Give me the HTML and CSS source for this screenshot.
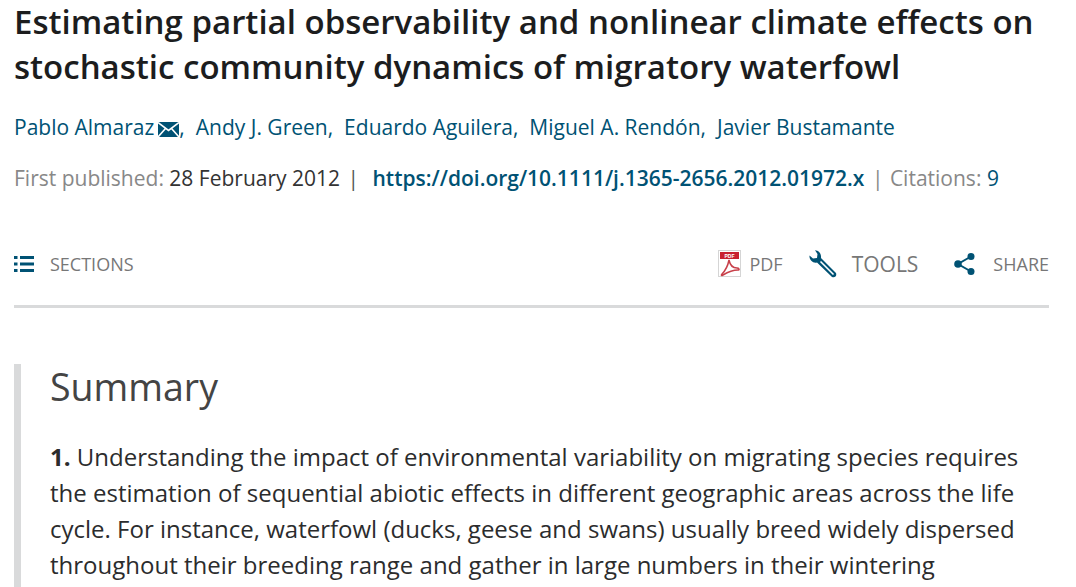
FILE: index.html
```html
<!DOCTYPE html>
<html lang="en">
<head>
    <meta charset="UTF-8">
    <title>Estimating partial observability and nonlinear climate effects</title>
    <link rel="stylesheet" href="styles.css">
</head>
<body>
    <div class="article">
        <h1>Estimating partial observability and nonlinear climate effects on stochastic community dynamics of migratory waterfowl</h1>
        <div class="authors">
            <a class="author">Pablo Almaraz<svg class="mail" width="21" height="15" viewBox="0 0 21 15"><rect width="21" height="15" fill="#005274"/><path d="M0 0.500 10.500 8.500 21 0.500M0 15 7.500 6.500M21 15 13.500 6.500" fill="none" stroke="#fff" stroke-width="1.600"/></svg>,</a>
            <a class="author">Andy J. Green,</a>
            <a class="author">Eduardo Aguilera,</a>
            <a class="author">Miguel A. Rendón,</a>
            <a class="author">Javier Bustamante</a>
        </div>
        <div class="meta">
            <span class="label">First published:</span> 28 February 2012
            <span class="sep">|</span>
            <a class="doi">https://doi.org/10.1111/j.1365-2656.2012.01972.x</a>
            <span class="sep2">|</span>
            <span class="label">Citations:</span> <a class="cites">9</a>
        </div>
        <div class="toolbar">
            <a class="tool sections">
                <svg width="20" height="16" viewBox="0 0 20 16"><path d="M0 0h3.500v3H0zM6 0h14v3H6zM0 6.500h3.500v3H0zM6 6.500h14v3H6zM0 13h3.500v3H0zM6 13h14v3H6z" fill="#005274"/></svg>
                SECTIONS
            </a>
            <div class="tool-group">
                <a class="tool pdf">
                    <svg width="23" height="27" viewBox="0 0 23 27"><rect x="0.500" y="0.500" width="22" height="26" fill="#fff" stroke="#d5d5d5"/><rect x="2" y="2" width="19" height="7" fill="#c8202f"/><text x="11.500" y="7.500" class="pdf-mark">PDF</text><path d="M11 10c-1 5-3 10-7 14-1 1-1 2 1 1 5-3 10-5 15-5 2 0 1-2-1-2-4 0-7-3-8-8z" fill="none" stroke="#c8404a" stroke-width="1.500"/></svg>
                    PDF
                </a>
                <a class="tool tools">
                    <svg width="28" height="28" viewBox="0 0 28 28"><path d="M6 0.300C10 0.500 12.500 4 12 8L27 23c1 3-1 5-4 4L8 12.500C4 13.500 0 10 0.500 5.500L4 8.500 8 8 8.500 4z" fill="#005274"/><path d="M11.500 11.500 24.500 24.500" stroke="#fff" stroke-width="1.600"/></svg>
                    TOOLS
                </a>
                <a class="tool share">
                    <svg width="21" height="22" viewBox="0 0 21 22"><circle cx="4" cy="11" r="3.800" fill="#005274"/><circle cx="17" cy="3.500" r="3.500" fill="#005274"/><circle cx="17" cy="18.500" r="3.500" fill="#005274"/><path d="M17 3.500 4 11 17 18.500" fill="none" stroke="#005274" stroke-width="2"/></svg>
                    SHARE
                </a>
            </div>
        </div>
        <div class="abstract">
            <h2>Summary</h2>
            <p><b>1.</b> Understanding the impact of environmental variability on migrating species requires the estimation of sequential abiotic effects in different geographic areas across the life cycle. For instance, waterfowl (ducks, geese and swans) usually breed widely dispersed throughout their breeding range and gather in large numbers in their wintering</p>
        </div>
    </div>
</body>
</html>
```

FILE: styles.css
```css
html, body {
    height: 100%;
    overflow: hidden;
}
body {
    margin: 0;
    background-color: #fff;
    font-family: "Open Sans", sans-serif;
    color: #1c1d1e;
}
.article {
    padding: 0 27px 0 14px;
}
h1 {
    margin: -1px 0 0;
    font-size: 33px;
    line-height: 45px;
    font-weight: 600;
    color: #1c1d1e;
}
.authors {
    margin-top: 24px;
    display: flex;
    gap: 11px;
    font-size: 21px;
    line-height: 28px;
    color: #005274;
}
.mail {
    margin-left: 4px;
    vertical-align: -2px;
}
.meta {
    margin-top: 23px;
    font-size: 21px;
    line-height: 28px;
    color: #333;
    white-space: nowrap;
}
.label {
    color: #888;
}
.sep {
    margin: 0 8px 0 2px;
    color: #555;
}
.sep2 {
    margin: 0 1px 0 2px;
    color: #888;
}
.doi {
    color: #005274;
    font-weight: 600;
}
.cites {
    color: #005274;
}
.toolbar {
    margin-top: 37px;
    height: 69px;
    padding-bottom: 7px;
    display: flex;
    justify-content: space-between;
    align-items: center;
    border-bottom: 3px solid #d9dadb;
}
.tool {
    display: flex;
    align-items: center;
    font-size: 18px;
    color: #777;
}
.sections svg {
    margin-right: 16px;
}
.tool-group {
    display: flex;
    align-items: center;
}
.pdf svg {
    margin-right: 8px;
}
.pdf-mark {
    font-family: "Liberation Sans", sans-serif;
    font-size: 5px;
    font-weight: 700;
    fill: #fff;
    text-anchor: middle;
}
.tools {
    margin-left: 26px;
    font-size: 21px;
}
.tools svg {
    margin-right: 15px;
}
.share {
    margin-left: 36px;
}
.share svg {
    margin-right: 18px;
}
.abstract {
    margin-top: 56px;
    padding-left: 29px;
    padding-bottom: 30px;
    border-left: 7px solid #d9dadb;
}
h2 {
    margin: 0;
    font-size: 37.500px;
    line-height: 46px;
    font-weight: 400;
    color: #444;
}
.abstract p {
    margin: 29px 0 0;
    font-size: 24px;
    line-height: 36px;
    color: #2b2c2d;
}
.abstract b {
    font-weight: 700;
}
```
